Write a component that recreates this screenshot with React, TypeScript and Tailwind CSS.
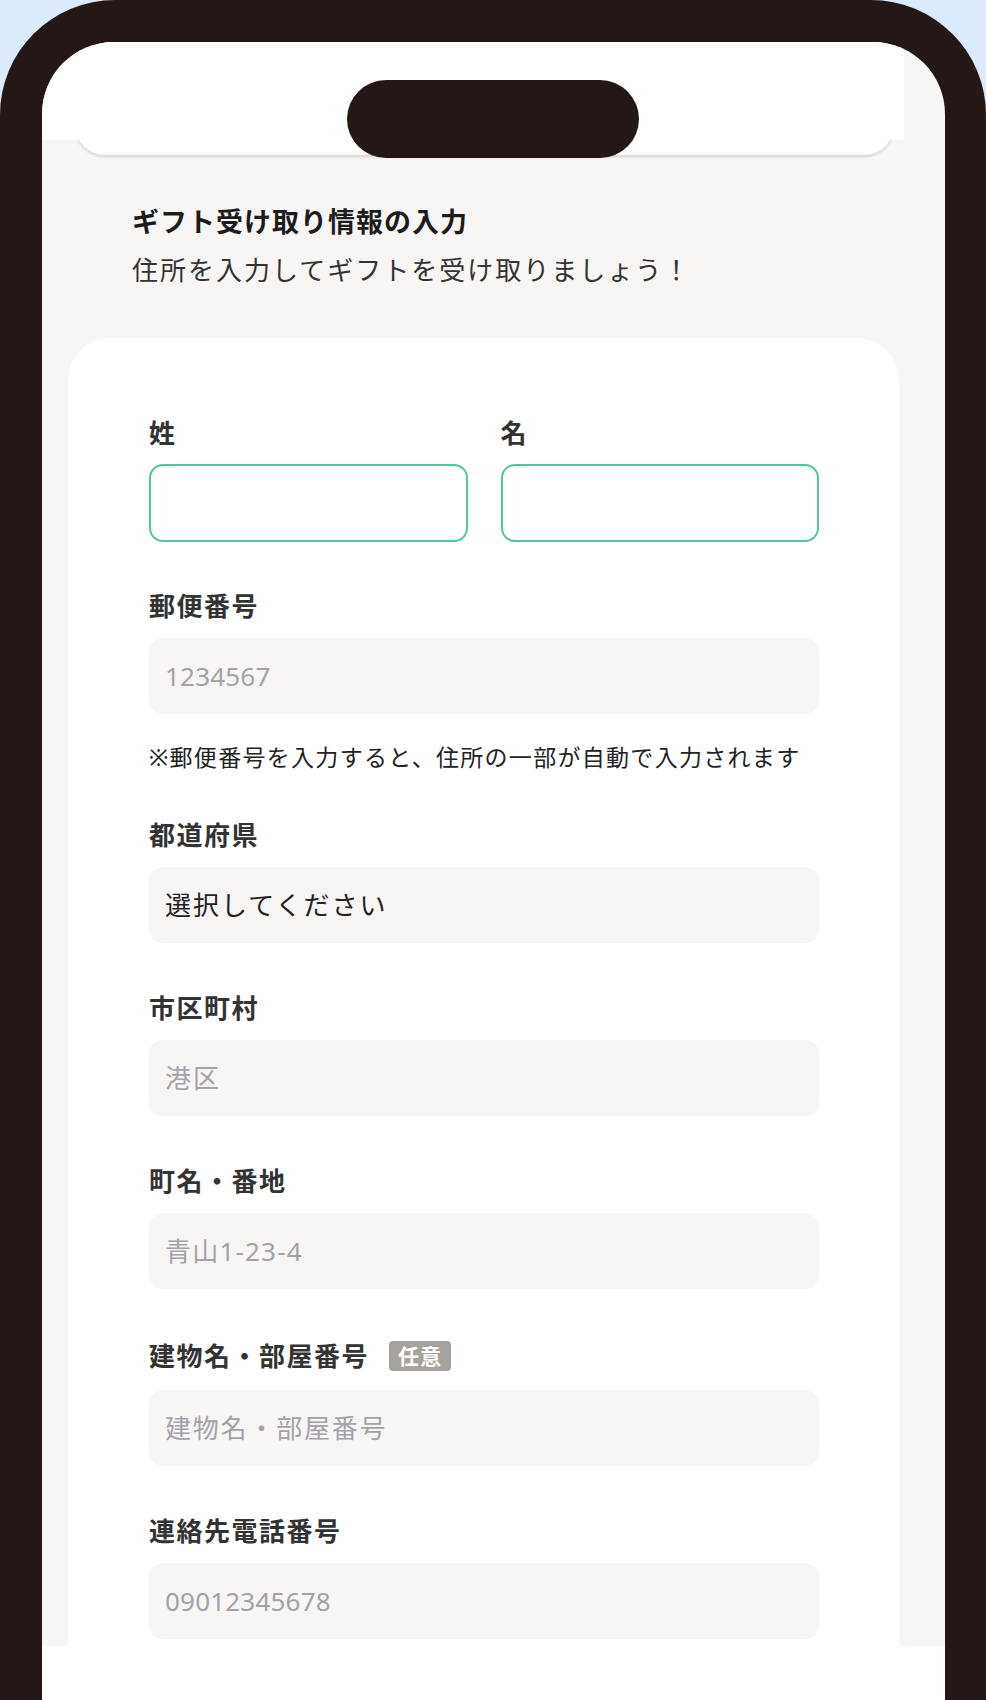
import React from 'react';

type Field = {
  label: string;
  placeholder: string;
  badge?: string;
  inputClass: string;
};

const addressFields: Field[] = [
  { label: '市区町村', placeholder: '港区', inputClass: 'tracking-[2px]' },
  { label: '町名・番地', placeholder: '青山1-23-4', inputClass: 'tracking-[1.2px]' },
  { label: '建物名・部屋番号', placeholder: '建物名・部屋番号', badge: '任意', inputClass: 'tracking-[1.8px]' },
  { label: '連絡先電話番号', placeholder: '09012345678', inputClass: 'tracking-[0.2px]' },
];

function Label({ children, badge }: { children: React.ReactNode; badge?: string }) {
  return (
    <div className={`flex items-center gap-[20px] ${badge ? 'h-[38px]' : 'h-[34px]'}`}>
      <span className="text-[26px] font-bold leading-none tracking-[1.5px] text-[#333]">{children}</span>
      {badge && (
        <span className="h-[30px] rounded-[4px] bg-[#a6a29d] px-[9px] text-[21px] font-bold leading-[30px] tracking-[1px] text-white">
          {badge}
        </span>
      )}
    </div>
  );
}

function GreyInput({ placeholder, className }: { placeholder: string; className: string }) {
  return (
    <input
      placeholder={placeholder}
      className={`mt-[15px] block h-[76px] w-full rounded-[14px] bg-[#f7f6f4] px-[16px] text-[26px] text-[#222] outline-none placeholder:text-[#a3a2aa] ${className}`}
    />
  );
}

export default function App() {
  return (
    <div className="h-[1700px] w-full overflow-hidden bg-[#dcebfb] font-[family-name:'Noto_Sans','Noto_Sans_CJK_JP',sans-serif]">
      {/* phone frame */}
      <div className="rounded-t-[115px] bg-[#231815] pl-[42px] pr-[41px] pt-[42px]">
        <div className="relative overflow-hidden rounded-t-[72px] bg-[#f7f6f4]">
          {/* status bar + header sheet */}
          <div className="relative z-10 h-[98px] w-[862px] bg-white" />
          <div className="-mt-[30px] ml-[33px] h-[45px] w-[819px] rounded-b-[30px] bg-white shadow-[0_2px_3px_rgba(0,0,0,0.14)]" />

          {/* intro */}
          <div className="mt-[50px] pl-[90px]">
            <h1 className="text-[27px] font-bold leading-[34px] tracking-[1px] text-[#1c1c1c]">ギフト受け取り情報の入力</h1>
            <p className="mt-[14px] text-[26px] leading-[34px] tracking-[2px] text-[#333]">住所を入力してギフトを受け取りましょう！</p>
          </div>

          {/* form card */}
          <div className="ml-[26px] mt-[51px] w-[831px] rounded-t-[42px] bg-white pb-[7px] pl-[81px] pr-[80px] pt-[78px]">
            <div className="grid grid-cols-2 gap-[33px]">
              {['姓', '名'].map(l => (
                <div key={l}>
                  <Label>{l}</Label>
                  <input className="mt-[14px] block h-[78px] w-full rounded-[14px] border-2 border-[#52c79b] bg-white px-[16px] text-[26px] outline-none" />
                </div>
              ))}
            </div>

            <div className="mt-[47px]">
              <Label>郵便番号</Label>
              <GreyInput placeholder="1234567" className="tracking-[0.2px]" />
            </div>
            <p className="mt-[28px] text-[23px] leading-[30px] tracking-[1.3px] text-[#222]">
              ※郵便番号を入力すると、住所の一部が自動で入力されます
            </p>

            <div className="mt-[46px]">
              <Label>都道府県</Label>
              <select className="mt-[15px] block h-[76px] w-full appearance-none rounded-[14px] bg-[#f7f6f4] px-[16px] text-[26px] tracking-[2px] text-[#222] outline-none">
                <option>選択してください</option>
              </select>
            </div>

            {addressFields.map(f => (
              <div key={f.label} className="mt-[48px]">
                <Label badge={f.badge}>{f.label}</Label>
                <GreyInput placeholder={f.placeholder} className={f.inputClass} />
              </div>
            ))}
          </div>

          {/* bottom bar */}
          <div className="h-[80px] bg-white" />

          {/* dynamic island */}
          <div className="absolute left-[305px] top-[38px] z-20 h-[78px] w-[292px] rounded-full bg-[#231815]" />
        </div>
      </div>
    </div>
  );
}
